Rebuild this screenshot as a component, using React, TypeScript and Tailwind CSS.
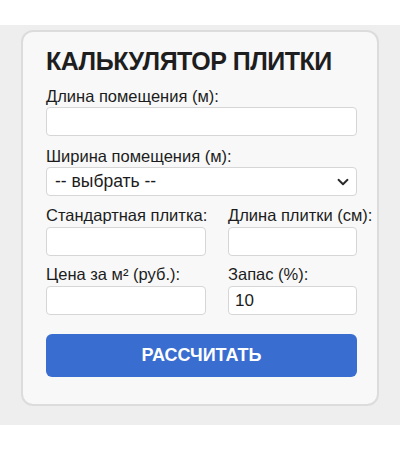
import React from "react";

const font = { fontFamily: '"Liberation Sans", Arial, sans-serif' };

function Field({ label, value }: { label: string; value?: string }) {
  return (
    <div className="flex flex-col">
      <label className="whitespace-nowrap text-[16.5px] leading-[20px] text-[#1c1c1c] mb-[2px]">{label}</label>
      <input
        readOnly
        value={value ?? ""}
        className="h-[29px] w-full rounded-[4px] border border-[#d6d6d6] bg-white px-[6px] text-[17px] text-[#1c1c1c] outline-none"
        style={font}
      />
    </div>
  );
}

export default function App() {
  return (
    <div className="w-[400px] bg-white" style={font}>
      <div className="h-[25px]" />
      <div className="h-[400px] bg-[#eeeeee] px-[21px] pt-[5px]">
        <div className="h-[376px] rounded-[12px] border-2 border-[#dcdcdc] bg-[#f8f8f8] pl-[23px] pr-[20px] pt-[14px]">
          <h1 className="text-[25px] leading-[30px] font-bold text-[#1e1e1e] tracking-[-0.5px]">
            КАЛЬКУЛЯТОР ПЛИТКИ
          </h1>
          <div className="mt-[10px] flex flex-col">
            <label className="text-[16.5px] leading-[20px] text-[#1c1c1c] mb-[1px]">Длина помещения (м):</label>
            <input
              readOnly
              value=""
              className="h-[29px] w-full rounded-[4px] border border-[#d6d6d6] bg-white px-[6px] outline-none"
            />
          </div>
          <div className="mt-[10px] flex flex-col">
            <label className="text-[16.5px] leading-[20px] text-[#1c1c1c] mb-[1px]">Ширина помещения (м):</label>
            <div className="flex h-[29px] items-center justify-between rounded-[4px] border border-[#d6d6d6] bg-white pl-[8px] pr-[7px]">
              <span className="text-[17.5px] text-[#1c1c1c]">-- выбрать --</span>
              <svg width="12" height="8" viewBox="0 0 12 8" fill="none">
                <path d="M1.5 1.8 L6 6.2 L10.5 1.8" stroke="#2a2a2a" strokeWidth="1.9" strokeLinecap="round" strokeLinejoin="round" />
              </svg>
            </div>
          </div>
          <div className="mt-[9px] grid grid-cols-[160px_129px] gap-x-[22px] gap-y-[8px]">
            <Field label="Стандартная плитка:" />
            <Field label="Длина плитки (см):" />
            <Field label="Цена за м² (руб.):" />
            <Field label="Запас (%):" value="10" />
          </div>
          <button
            className="mt-[19px] flex h-[43px] w-full items-center justify-center rounded-[6px] bg-[#3a6dd0] text-[18px] font-bold text-white"
            style={font}
          >
            РАССЧИТАТЬ
          </button>
        </div>
      </div>
    </div>
  );
}
